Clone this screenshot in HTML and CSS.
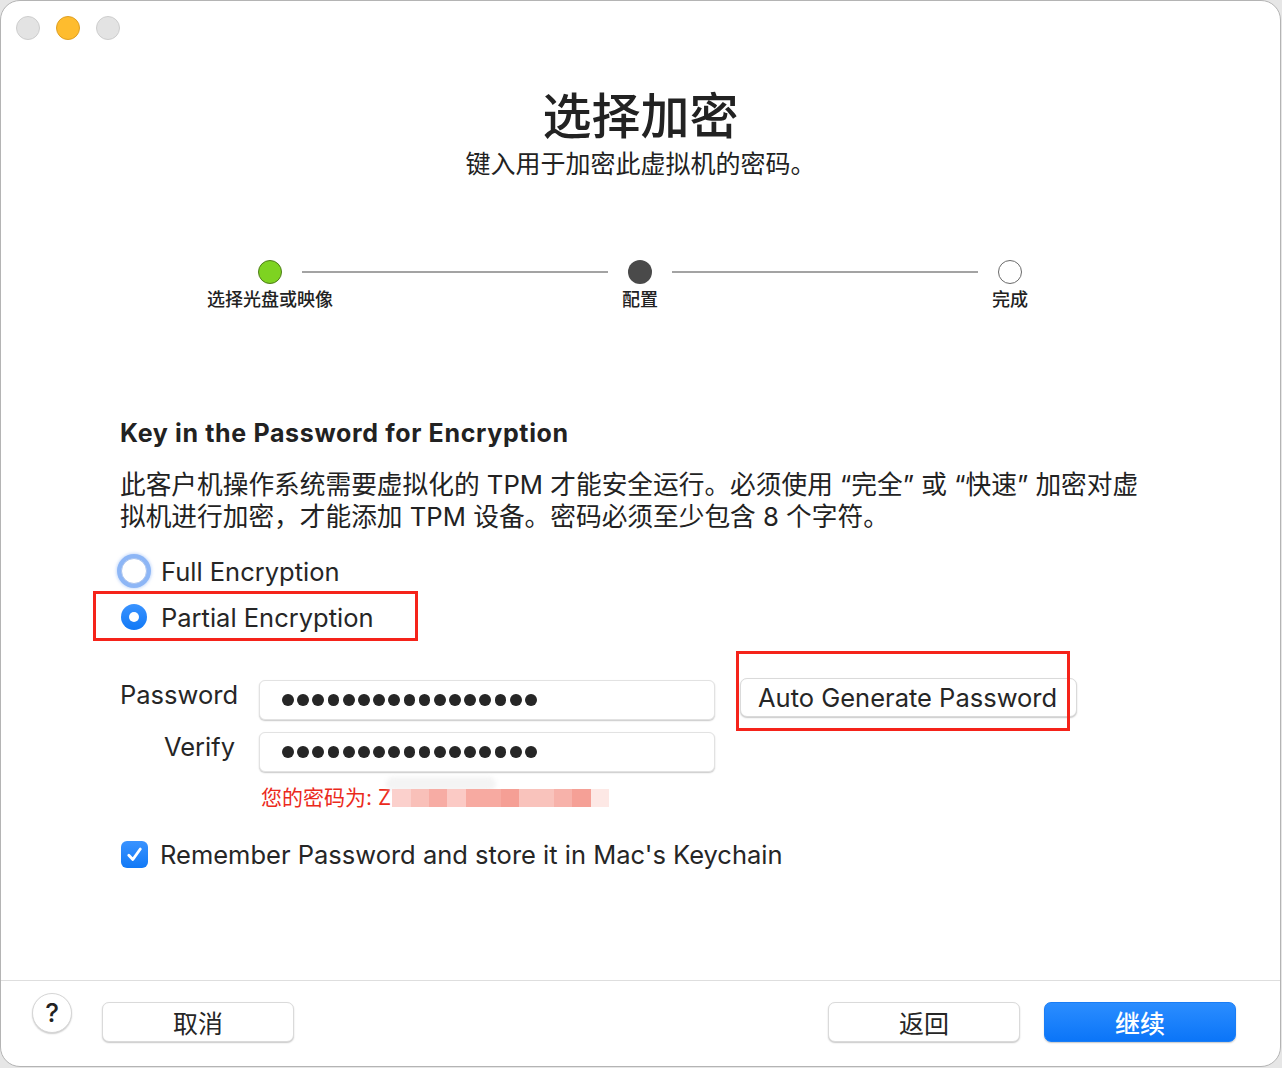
FILE: index.html
```html
<!DOCTYPE html>
<html lang="zh-CN">
<head>
<meta charset="utf-8">
<title>选择加密</title>
<link rel="stylesheet" href="styles.css">
</head>
<body>
<div class="window">
  <div class="titlebar">
    <span class="light"></span>
    <span class="light yellow"></span>
    <span class="light"></span>
  </div>

  <main class="main">
    <h1 class="title">选择加密</h1>
    <p class="subtitle">键入用于加密此虚拟机的密码。</p>

    <div class="stepper">
      <div class="step"><span class="dot done"></span><span class="step-label">选择光盘或映像</span></div>
      <span class="line"></span>
      <div class="step"><span class="dot current"></span><span class="step-label">配置</span></div>
      <span class="line"></span>
      <div class="step"><span class="dot todo"></span><span class="step-label">完成</span></div>
    </div>

    <div class="content">
      <h2 class="section-title">Key in the Password for Encryption</h2>
      <p class="desc">此客户机操作系统需要虚拟化的 TPM 才能安全运行。必须使用 “完全” 或 “快速” 加密对虚<br>拟机进行加密，才能添加 TPM 设备。密码必须至少包含 8 个字符。</p>

      <div class="radios">
        <label class="radio-row">
          <span class="radio focus"></span>
          <span>Full Encryption</span>
        </label>
        <label class="radio-row marked">
          <span class="radio checked"></span>
          <span>Partial Encryption</span>
          <span class="annot annot-radio"></span>
        </label>
      </div>

      <div class="form">
        <span class="form-label">Password</span>
        <div class="field"><span class="dots"><i></i><i></i><i></i><i></i><i></i><i></i><i></i><i></i><i></i><i></i><i></i><i></i><i></i><i></i><i></i><i></i><i></i></span></div>
        <div class="gen-wrap">
          <button class="btn gen">Auto Generate Password</button>
          <span class="annot annot-gen"></span>
        </div>

        <span class="form-label">Verify</span>
        <div class="field"><span class="dots"><i></i><i></i><i></i><i></i><i></i><i></i><i></i><i></i><i></i><i></i><i></i><i></i><i></i><i></i><i></i><i></i><i></i></span></div>

        <div class="reveal">
          <span class="reveal-text">您的密码为: Z</span><span class="blur"><b class="b1"></b><b class="b2"></b><b class="b3"></b><b class="b4"></b><b class="b5"></b><b class="b6"></b><b class="b7"></b><b class="b8"></b><b class="b9"></b><b class="b10"></b></span>
        </div>
      </div>

      <label class="remember">
        <span class="checkbox">
          <svg width="16" height="16" viewBox="0 0 16 16"><path d="M3.2 8.6 L6.6 12.2 L12.9 3.4" fill="none" stroke="#fff" stroke-width="2.4" stroke-linecap="round" stroke-linejoin="round"/></svg>
        </span>
        <span>Remember Password and store it in Mac's Keychain</span>
      </label>
    </div>
  </main>

  <footer class="footer">
    <button class="help">?</button>
    <button class="btn cancel">取消</button>
    <span class="spacer"></span>
    <button class="btn back">返回</button>
    <button class="btn primary">继续</button>
  </footer>
</div>
</body>
</html>
```

FILE: styles.css
```css
* { box-sizing: border-box; }

html, body {
  margin: 0;
  padding: 0;
}

body {
  background: #e6e6e6;
  font-family: Inter, "Noto Sans CJK SC", "Liberation Sans", sans-serif;
  color: #262626;
  width: 1282px;
  height: 1068px;
  overflow: hidden;
}

.window {
  width: 1281px;
  height: 1067px;
  background: #ffffff;
  border: 1px solid #b4b4b4;
  border-radius: 20px;
  display: flex;
  flex-direction: column;
  overflow: hidden;
}

/* title bar */
.titlebar {
  display: flex;
  gap: 16px;
  padding: 15px 0 0 15px;
  height: 39px;
}

.light {
  width: 24px;
  height: 24px;
  border-radius: 50%;
  background: #e3e3e3;
  border: 1px solid #cdcdcd;
}

.light.yellow {
  background: #febc2e;
  border-color: #de9f23;
}

.main {
  flex: 1;
  display: flex;
  flex-direction: column;
}

.title {
  margin: 49px 0 0;
  text-align: center;
  font-size: 49px;
  line-height: 56px;
  font-weight: 500;
  font-family: Inter, "Noto Sans CJK SC", sans-serif;
  color: #222;
}

.subtitle {
  margin: 3px 0 0;
  text-align: center;
  font-size: 25px;
  line-height: 32px;
  font-family: Inter, "Noto Sans CJK SC", sans-serif;
  color: #222;
}

/* stepper */
.stepper {
  margin: 80px 0 0 257px;
  width: 764px;
  display: flex;
  align-items: flex-start;
}

.step {
  width: 24px;
  display: flex;
  flex-direction: column;
  align-items: center;
}

.dot {
  width: 24px;
  height: 24px;
  border-radius: 50%;
  flex: none;
}

.dot.done {
  background: #7ed321;
  border: 1px solid #4f7d1a;
}

.dot.current {
  background: #4a4a4a;
}

.dot.todo {
  background: #fff;
  border: 1px solid #6a6a6a;
}

.step-label {
  margin-top: 6px;
  font-size: 18px;
  line-height: 20px;
  white-space: nowrap;
  font-family: Inter, "Noto Sans CJK SC", sans-serif;
  font-weight: 500;
  color: #222;
}

.line {
  flex: 1;
  height: 2px;
  background: #a3a3a3;
  margin: 11px 20px 0;
}

/* content */
.content {
  padding-left: 119px;
}

.section-title {
  margin: 107px 0 0;
  font-size: 25px;
  line-height: 32px;
  font-weight: 700;
  color: #222;
  letter-spacing: 0.65px;
}

.desc {
  margin: 20px 0 0;
  font-size: 25.7px;
  line-height: 32px;
  color: #222;
  white-space: nowrap;
}

.radios {
  margin-top: 15px;
  display: flex;
  flex-direction: column;
}

.radio-row {
  height: 46px;
  display: flex;
  align-items: center;
  gap: 14px;
  font-size: 25.5px;
  color: #262626;
  width: fit-content;
}

.radio-row.marked {
  position: relative;
}

.radio {
  margin-left: 1px;
  width: 26px;
  height: 26px;
  border-radius: 50%;
  flex: none;
  display: flex;
  align-items: center;
  justify-content: center;
}

.radio.focus {
  background: #fff;
  border: 1px solid #a9c3ee;
  box-shadow: 0 0 0 4px #8db6f6, 0 0 3px 5px rgba(141, 182, 246, 0.45);
}

.radio.checked {
  background: linear-gradient(#3a93ff, #1179f6);
}

.radio.checked::after {
  content: "";
  width: 10px;
  height: 10px;
  border-radius: 50%;
  background: #fff;
}

.annot {
  position: absolute;
  border: 3px solid #f5231a;
  pointer-events: none;
}

.annot-radio {
  left: -27px;
  top: -3px;
  width: 325px;
  height: 50px;
}

/* form */
.form {
  margin-top: 40px;
  display: grid;
  grid-template-columns: 115px 456px 337px;
  column-gap: 24px;
  row-gap: 12px;
}

.form-label {
  align-self: start;
  text-align: right;
  font-size: 25.5px;
  line-height: 30px;
  color: #262626;
  white-space: nowrap;
}

.field {
  height: 40px;
  background: #fff;
  border: 1px solid #e2e2e2;
  border-radius: 6px;
  box-shadow: 0 1px 1.5px rgba(0, 0, 0, 0.22);
  display: flex;
  align-items: center;
  padding-left: 22px;
}

.dots {
  display: flex;
  gap: 3.4px;
}

.dots i {
  width: 11.8px;
  height: 11.8px;
  border-radius: 50%;
  background: #262626;
}

.gen-wrap {
  position: relative;
  margin-left: 1px;
  margin-top: -2px;
}

.btn {
  font-family: Inter, "Noto Sans CJK SC", sans-serif;
  font-size: 25.5px;
  color: #262626;
  background: #fff;
  border: 1px solid #dadada;
  border-radius: 7px;
  box-shadow: 0 1px 1.5px rgba(0, 0, 0, 0.22);
  height: 40px;
  padding: 0;
  cursor: default;
}

.btn.gen {
  width: 337px;
  height: 39px;
  text-align: left;
  padding-left: 17px;
  line-height: 36px;
  white-space: nowrap;
}

.annot-gen {
  left: -4px;
  top: -27px;
  width: 334px;
  height: 80px;
}

.reveal {
  grid-column: 2 / 4;
  margin-top: 2px;
  padding-left: 2px;
  height: 24px;
  display: flex;
  align-items: center;
}

.reveal-text {
  font-size: 21px;
  line-height: 24px;
  color: #eb2a1c;
  font-family: Inter, "Noto Sans CJK SC", sans-serif;
}

.blur {
  display: flex;
  height: 18px;
  margin-left: 1px;
  position: relative;
}

.blur::before {
  content: "";
  position: absolute;
  left: -6px;
  top: -12px;
  width: 110px;
  height: 14px;
  border-radius: 8px;
  background: rgba(240, 240, 240, 0.7);
  filter: blur(2px);
}

.blur b { display: block; height: 18px; position: relative; }
.blur .b1 { width: 19px; background: #fbd0cc; }
.blur .b2 { width: 18px; background: #f9c0b9; }
.blur .b3 { width: 18px; background: #f7aca4; }
.blur .b4 { width: 19px; background: #fbcac5; }
.blur .b5 { width: 35px; background: #f7aaa1; }
.blur .b6 { width: 18px; background: #f59f95; }
.blur .b7 { width: 35px; background: #f9c3bc; }
.blur .b8 { width: 18px; background: #f7b2aa; }
.blur .b9 { width: 19px; background: #f5a096; }
.blur .b10 { width: 18px; background: #fde8e5; }

.remember {
  margin-top: 28px;
  height: 32px;
  display: flex;
  align-items: center;
  gap: 12px;
  font-size: 25.5px;
  color: #262626;
}

.checkbox {
  margin-left: 1px;
  width: 27px;
  height: 27px;
  border-radius: 6px;
  background: linear-gradient(#3a93ff, #1179f6);
  display: flex;
  align-items: center;
  justify-content: center;
}

.checkbox svg { width: 19px; height: 19px; }

/* footer */
.footer {
  height: 86px;
  border-top: 1px solid #dedede;
  display: flex;
  align-items: flex-start;
  padding: 12px 44px 0 31px;
}

.help {
  width: 40px;
  height: 40px;
  border-radius: 50%;
  background: #fff;
  border: 1px solid #d6d6d6;
  box-shadow: 0 1px 1.5px rgba(0, 0, 0, 0.2);
  font-family: Inter, sans-serif;
  font-size: 26px;
  font-weight: 500;
  color: #222;
  padding: 0;
  line-height: 38px;
}

.btn.cancel,
.btn.back,
.btn.primary {
  width: 192px;
  margin-top: 9px;
  font-size: 25px;
}

.btn.cancel { margin-left: 30px; }

.spacer { flex: 1; }

.btn.primary {
  margin-left: 24px;
  background: linear-gradient(#2b8dff, #0b75f8);
  border-color: #1a7df5;
  color: #fff;
  font-weight: 500;
}
```
